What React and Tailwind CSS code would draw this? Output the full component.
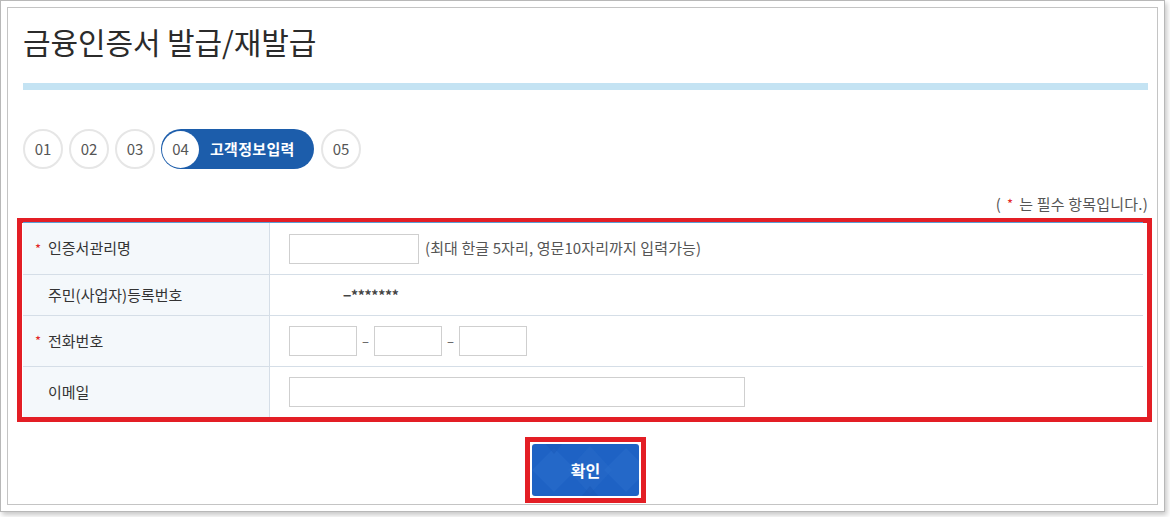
import React from 'react';

const steps = ['01', '02', '03'];

function Req() {
  return <span className="inline-block w-[13px] text-[#e31e25] text-[13px]">*</span>;
}

function Row({ label, required, height, last, children }) {
  return (
    <div className={`flex ${last ? '' : 'border-b border-[#d5dee7]'}`} style={{ height }}>
      <div className="w-[247px] shrink-0 bg-[#f4f8fb] border-r border-[#d5dee7] flex items-center pl-[12px] text-[15px] text-[#333]">
        {required ? <Req /> : <span className="inline-block w-[13px]" />}
        <span>{label}</span>
      </div>
      <div className="flex-1 flex items-center pl-[19px]">{children}</div>
    </div>
  );
}

function Box({ w }) {
  return <div className={`${w} h-[30px] border border-[#cfcfcf] bg-white`} />;
}

export default function App() {
  return (
    <div className="w-[1170px] h-[517px] bg-white font-['Noto_Sans_CJK_KR',sans-serif]">
      <div className="w-[1165px] h-[512px] border border-[#b8b8b8] p-[6px] shadow-[2px_3px_5px_rgba(0,0,0,0.22)]">
        <div className="h-full border border-[#c4c4c4] pl-[15px] pr-[9px]">
          {/* title */}
          <h1 className="mt-[9px] text-[30px] leading-[48px] text-[#2b2b2b] font-normal tracking-[-0.1px]">
            금융인증서 발급/재발급
          </h1>
          <div className="mt-[18px] h-[7px] bg-[#c4e3f3]" />

          {/* steps */}
          <div className="mt-[39px] flex items-center gap-[6px] h-[40px]">
            {steps.map((s) => (
              <div
                key={s}
                className="w-[40px] h-[40px] rounded-full border-2 border-[#e6e6e6] flex items-center justify-center text-[15px] text-[#555]"
              >
                {s}
              </div>
            ))}
            <div className="h-[40px] w-[153px] rounded-full bg-[#1c5dab] flex items-center pl-[1px]">
              <div className="w-[37px] h-[37px] rounded-full bg-white flex items-center justify-center text-[15px] text-[#555]">
                04
              </div>
              <span className="ml-[11px] text-[15px] font-bold text-white tracking-[0.3px]">고객정보입력</span>
            </div>
            <div className="ml-[1px] w-[40px] h-[40px] rounded-full border-2 border-[#e6e6e6] flex items-center justify-center text-[15px] text-[#555]">
              05
            </div>
          </div>

          {/* required note */}
          <div className="mt-[25px] h-[20px] flex justify-end items-center text-[15px] text-[#555] leading-[20px] tracking-[0.2px]">
            ( <span className="text-[#e31e25] mx-[6px] text-[13px]">*</span>는 필수 항목입니다.)
          </div>

          {/* form table with red highlight */}
          <div className="ml-[-6px] mr-[-4px] mt-[4px] border-[5px] border-[#e31e25] pl-[1px] pr-[4px]">
            <div className="border-t border-[#5a9fd6] mt-[-1px]">
              <Row label="인증서관리명" required height={52}>
                <Box w="w-[130px]" />
                <span className="ml-[6px] text-[15px] text-[#555] tracking-[0.1px]">(최대 한글 5자리, 영문10자리까지 입력가능)</span>
              </Row>
              <Row label="주민(사업자)등록번호" height={41}>
                <span className="ml-[54px] text-[14px] text-[#444] font-bold tracking-[-0.3px]">−*******</span>
              </Row>
              <Row label="전화번호" required height={51}>
                <div className="flex items-center gap-[5px]">
                  <Box w="w-[68px]" />
                  <span className="text-[13px] text-[#555]">–</span>
                  <Box w="w-[68px]" />
                  <span className="text-[13px] text-[#555]">–</span>
                  <Box w="w-[68px]" />
                </div>
              </Row>
              <Row label="이메일" height={50} last>
                <Box w="w-[456px]" />
              </Row>
            </div>
          </div>

          {/* confirm button */}
          <div className="mt-[15px] flex justify-center">
            <div className="border-[5px] border-[#e31e25] p-[2px] bg-white">
              <button className="relative w-[107px] h-[52px] rounded-[3px] bg-[#1e62c4] overflow-hidden flex items-center justify-center">
                <svg className="absolute inset-0" width="107" height="52" viewBox="0 0 107 52">
                  <polygon points="0,26 22,4 44,26 22,48" fill="#2a6dcb" opacity="0.5" />
                  <polygon points="36,26 58,2 80,26 58,50" fill="#2a6dcb" opacity="0.4" />
                  <polygon points="72,26 94,4 116,26 94,48" fill="#2a6dcb" opacity="0.5" />
                  <polygon points="14,0 30,0 22,10" fill="#1a58b8" opacity="0.5" />
                  <polygon points="50,52 66,52 58,42" fill="#1a58b8" opacity="0.5" />
                </svg>
                <span className="relative text-[16px] font-bold text-white">확인</span>
              </button>
            </div>
          </div>
        </div>
      </div>
    </div>
  );
}
